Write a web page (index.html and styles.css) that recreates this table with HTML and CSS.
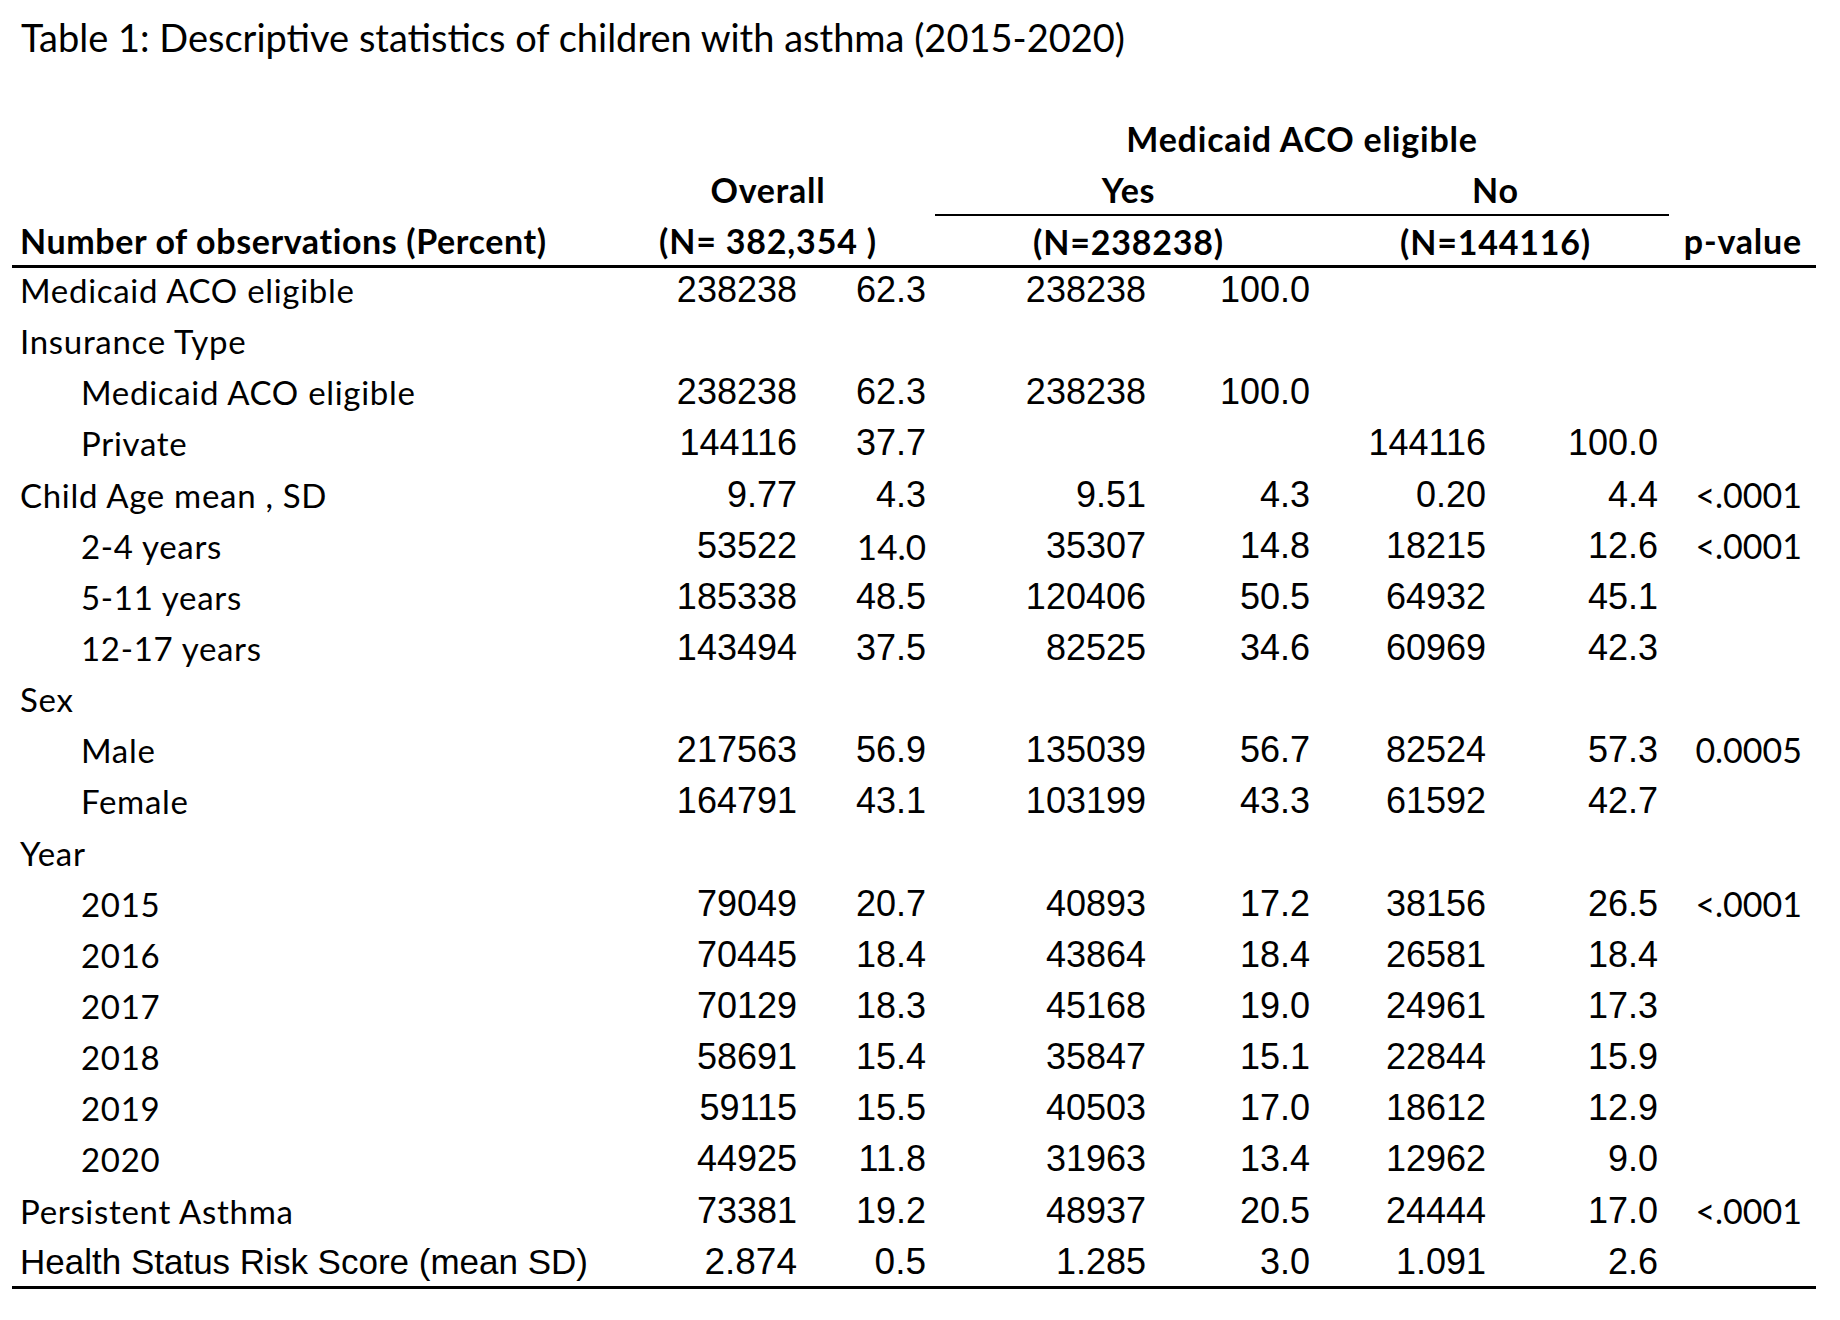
FILE: index.html
```html
<!DOCTYPE html>
<html lang="en">
<head>
<meta charset="utf-8">
<title>Table 1</title>
<link rel="stylesheet" href="styles.css">
</head>
<body>
<div class="page">
  <h1 class="title">Table 1: Descriptive statistics of children with asthma (2015-2020)</h1>
  <table class="stats">
    <colgroup>
      <col class="c-label">
      <col class="c-n1">
      <col class="c-p1">
      <col class="c-n2">
      <col class="c-p2">
      <col class="c-n3">
      <col class="c-p3">
      <col class="c-pv">
    </colgroup>
    <thead>
      <tr class="hrow">
        <th></th>
        <th colspan="2"></th>
        <th colspan="4" class="hc">Medicaid ACO eligible</th>
        <th></th>
      </tr>
      <tr class="hrow">
        <th></th>
        <th colspan="2" class="hc">Overall</th>
        <th colspan="2" class="hc uline">Yes</th>
        <th colspan="2" class="hc uline">No</th>
        <th></th>
      </tr>
      <tr class="hrow hlast">
        <th class="hl">Number of observations (Percent)</th>
        <th colspan="2" class="hc">(N= 382,354 )</th>
        <th colspan="2" class="hc">(N=238238)</th>
        <th colspan="2" class="hc">(N=144116)</th>
        <th class="hr">p-value</th>
      </tr>
    </thead>
    <tbody>
      <tr><td class="lab">Medicaid ACO eligible</td><td class="n">238238</td><td class="p">62.3</td><td class="n">238238</td><td class="p">100.0</td><td class="n"></td><td class="p"></td><td class="pv"></td></tr>
      <tr><td class="lab">Insurance Type</td><td class="n"></td><td class="p"></td><td class="n"></td><td class="p"></td><td class="n"></td><td class="p"></td><td class="pv"></td></tr>
      <tr><td class="lab ind">Medicaid ACO eligible</td><td class="n">238238</td><td class="p">62.3</td><td class="n">238238</td><td class="p">100.0</td><td class="n"></td><td class="p"></td><td class="pv"></td></tr>
      <tr><td class="lab ind">Private</td><td class="n">144116</td><td class="p">37.7</td><td class="n"></td><td class="p"></td><td class="n">144116</td><td class="p">100.0</td><td class="pv"></td></tr>
      <tr><td class="lab">Child Age mean , SD</td><td class="n">9.77</td><td class="p">4.3</td><td class="n">9.51</td><td class="p">4.3</td><td class="n">0.20</td><td class="p">4.4</td><td class="pv">&lt;.0001</td></tr>
      <tr><td class="lab ind">2-4 years</td><td class="n">53522</td><td class="p"><span class="alt">14.0</span></td><td class="n">35307</td><td class="p">14.8</td><td class="n">18215</td><td class="p">12.6</td><td class="pv">&lt;.0001</td></tr>
      <tr><td class="lab ind">5-11 years</td><td class="n">185338</td><td class="p">48.5</td><td class="n">120406</td><td class="p">50.5</td><td class="n">64932</td><td class="p">45.1</td><td class="pv"></td></tr>
      <tr><td class="lab ind">12-17 years</td><td class="n">143494</td><td class="p">37.5</td><td class="n">82525</td><td class="p">34.6</td><td class="n">60969</td><td class="p">42.3</td><td class="pv"></td></tr>
      <tr><td class="lab">Sex</td><td class="n"></td><td class="p"></td><td class="n"></td><td class="p"></td><td class="n"></td><td class="p"></td><td class="pv"></td></tr>
      <tr><td class="lab ind">Male</td><td class="n">217563</td><td class="p">56.9</td><td class="n">135039</td><td class="p">56.7</td><td class="n">82524</td><td class="p">57.3</td><td class="pv">0.0005</td></tr>
      <tr><td class="lab ind">Female</td><td class="n">164791</td><td class="p">43.1</td><td class="n">103199</td><td class="p">43.3</td><td class="n">61592</td><td class="p">42.7</td><td class="pv"></td></tr>
      <tr><td class="lab">Year</td><td class="n"></td><td class="p"></td><td class="n"></td><td class="p"></td><td class="n"></td><td class="p"></td><td class="pv"></td></tr>
      <tr><td class="lab ind">2015</td><td class="n">79049</td><td class="p">20.7</td><td class="n">40893</td><td class="p">17.2</td><td class="n">38156</td><td class="p">26.5</td><td class="pv">&lt;.0001</td></tr>
      <tr><td class="lab ind">2016</td><td class="n">70445</td><td class="p">18.4</td><td class="n">43864</td><td class="p">18.4</td><td class="n">26581</td><td class="p">18.4</td><td class="pv"></td></tr>
      <tr><td class="lab ind">2017</td><td class="n">70129</td><td class="p">18.3</td><td class="n">45168</td><td class="p">19.0</td><td class="n">24961</td><td class="p">17.3</td><td class="pv"></td></tr>
      <tr><td class="lab ind">2018</td><td class="n">58691</td><td class="p">15.4</td><td class="n">35847</td><td class="p">15.1</td><td class="n">22844</td><td class="p">15.9</td><td class="pv"></td></tr>
      <tr><td class="lab ind">2019</td><td class="n">59115</td><td class="p">15.5</td><td class="n">40503</td><td class="p">17.0</td><td class="n">18612</td><td class="p">12.9</td><td class="pv"></td></tr>
      <tr><td class="lab ind">2020</td><td class="n">44925</td><td class="p">11.8</td><td class="n">31963</td><td class="p">13.4</td><td class="n">12962</td><td class="p">9.0</td><td class="pv"></td></tr>
      <tr><td class="lab">Persistent Asthma</td><td class="n">73381</td><td class="p">19.2</td><td class="n">48937</td><td class="p">20.5</td><td class="n">24444</td><td class="p">17.0</td><td class="pv">&lt;.0001</td></tr>
      <tr class="last"><td class="lab arial">Health Status Risk Score (mean SD)</td><td class="n big">2.874</td><td class="p big">0.5</td><td class="n">1.285</td><td class="p">3.0</td><td class="n">1.091</td><td class="p">2.6</td><td class="pv"></td></tr>
    </tbody>
  </table>
</div>
</body>
</html>
```

FILE: styles.css
```css
html, body {
  margin: 0;
  padding: 0;
  background: #ffffff;
}

body {
  color: #000000;
  font-family: "Lato", "Liberation Sans", sans-serif;
}

.page {
  width: 1840px;
  height: 1320px;
  padding: 0 0 0 12px;
  box-sizing: border-box;
}

.title {
  margin: 0;
  padding: 15px 0 0 9px;
  height: 96px;
  box-sizing: border-box;
  font-weight: 400;
  font-size: 38px;
  line-height: 44px;
  letter-spacing: 0;
}

.stats {
  border-collapse: collapse;
  table-layout: fixed;
  width: 1804px;
  margin-top: 16px;
}

.c-label { width: 589px; }
.c-n1 { width: 196px; }
.c-p1 { width: 138px; }
.c-n2 { width: 211px; }
.c-p2 { width: 176px; }
.c-n3 { width: 164px; }
.c-p3 { width: 183px; }
.c-pv { width: 147px; }

.hrow th {
  height: 46px;
  padding: 5px 0 0 0;
  font-weight: 700;
  font-size: 34px;
  line-height: 44px;
  vertical-align: top;
  letter-spacing: 0.8px;
  white-space: nowrap;
}

.hc { text-align: center; }
.hl { text-align: left; padding-left: 8px !important; letter-spacing: 0.6px !important; }
.hr { text-align: right; padding-right: 14px !important; }

.uline {
  border-bottom: 2px solid #000;
}

.hrow.hlast th {
  border-bottom: 3px solid #000;
  height: 45px;
  padding-top: 4px;
}

.stats td {
  height: 51.15px;
  padding: 0;
  line-height: 44px;
  vertical-align: top;
  white-space: nowrap;
}

.lab {
  font-family: "Lato", "Liberation Sans", sans-serif;
  font-size: 33px;
  padding-left: 8px !important;
  letter-spacing: 0.7px;
}

.lab.ind {
  padding-left: 69px !important;
}

.lab.arial {
  font-family: "Liberation Sans", Arial, sans-serif;
  font-size: 35px;
  letter-spacing: 0;
}

.n, .p {
  font-family: "Liberation Sans", Arial, sans-serif;
  font-size: 36px;
  text-align: right;
}

tbody td:nth-child(3) { padding-right: 9px !important; }
tbody td:nth-child(5) { padding-right: 12px !important; }
tbody td:nth-child(7) { padding-right: 11px !important; }

.pv {
  font-family: "Lato", "Liberation Sans", sans-serif;
  font-size: 34px;
  text-align: right;
  padding-right: 14px !important;
}

.alt {
  font-family: "Lato", "Liberation Sans", sans-serif;
  font-size: 35px;
}

.big {
  font-size: 37px;
}

.stats .last td {
  height: 46px;
  border-bottom: 3px solid #000;
}
```
